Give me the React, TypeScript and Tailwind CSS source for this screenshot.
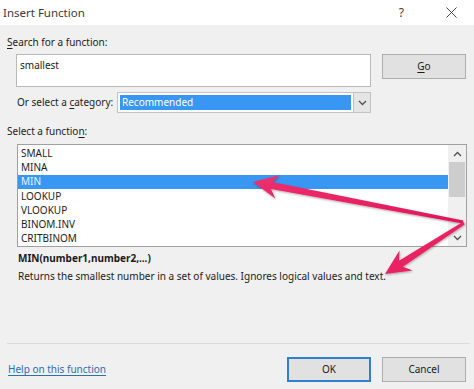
import React from "react";

type P = [number, number];

function arrowPoints(S: P, T: P, w0: number, w1: number, L: number, H: number, N: number): string {
  const dx = T[0] - S[0];
  const dy = T[1] - S[1];
  const len = Math.hypot(dx, dy);
  const u: P = [dx / len, dy / len];
  const n: P = [-u[1], u[0]];
  const B: P = [T[0] - L * u[0], T[1] - L * u[1]];
  const Bb: P = [T[0] - (L + N) * u[0], T[1] - (L + N) * u[1]];
  const pts: P[] = [
    [S[0] + w0 * n[0], S[1] + w0 * n[1]],
    [B[0] + w1 * n[0], B[1] + w1 * n[1]],
    [Bb[0] + H * n[0], Bb[1] + H * n[1]],
    T,
    [Bb[0] - H * n[0], Bb[1] - H * n[1]],
    [B[0] - w1 * n[0], B[1] - w1 * n[1]],
    [S[0] - w0 * n[0], S[1] - w0 * n[1]],
  ];
  return pts.map((p) => `${p[0].toFixed(1)},${p[1].toFixed(1)}`).join(" ");
}

const items = ["SMALL", "MINA", "MIN", "LOOKUP", "VLOOKUP", "BINOM.INV", "CRITBINOM"];

function ChevUp() {
  return (
    <svg width="9" height="6" viewBox="0 0 9 6">
      <polyline points="1,5 4.5,1.5 8,5" fill="none" stroke="#505050" strokeWidth="1.3" />
    </svg>
  );
}
function ChevDown() {
  return (
    <svg width="9" height="6" viewBox="0 0 9 6">
      <polyline points="1,1 4.5,4.5 8,1" fill="none" stroke="#505050" strokeWidth="1.3" />
    </svg>
  );
}

export default function App() {
  return (
    <div className="relative w-[474px] h-[389px] overflow-hidden bg-[#f0f0f0] font-['Noto_Sans',sans-serif] text-[10px] text-[#1b1b1b]">
      {/* title bar */}
      <div className="flex h-[25px] items-center bg-white">
        <div className="ml-[3px] text-[11.5px] text-[#3a3a3a]">Insert Function</div>
        <div className="ml-auto mr-[42px] text-[12px] text-[#3a3a3a]">?</div>
        <svg width="11" height="11" viewBox="0 0 11 11" className="mr-[17px]">
          <line x1="0.5" y1="0.5" x2="10.5" y2="10.5" stroke="#444" strokeWidth="1" />
          <line x1="10.5" y1="0.5" x2="0.5" y2="10.5" stroke="#444" strokeWidth="1" />
        </svg>
      </div>

      {/* search label */}
      <div className="mt-[10px] ml-[7px] h-[14px] leading-[14px]">
        <u className="underline-offset-2">S</u>earch for a function:
      </div>

      {/* search row */}
      <div className="mt-[5px] flex items-start">
        <div className="ml-[16px] h-[33px] w-[355px] border border-[#b9b9b9] bg-white px-[3px] pt-[3px] leading-[14px]">
          smallest
        </div>
        <div className="ml-[11px] flex h-[25px] w-[84px] items-center justify-center border border-[#adadad] bg-[#e1e1e1]">
          <span>
            <u className="underline-offset-2">G</u>o
          </span>
        </div>
      </div>

      {/* category row */}
      <div className="mt-[5px] flex h-[21px] items-center">
        <div className="ml-[17px] w-[100px] whitespace-nowrap">
          Or select a <u className="underline-offset-2">c</u>ategory:
        </div>
        <div className="flex h-[21px] w-[254px] items-stretch border border-[#c3c3c3] bg-white">
          <div className="m-[2px] flex flex-1 items-center bg-[#3897f3] pl-[2px] text-white">Recommended</div>
          <div className="flex w-[17px] items-center justify-center border-l border-[#c3c3c3] bg-[#e5e5e5]">
            <ChevDown />
          </div>
        </div>
      </div>

      {/* select label */}
      <div className="mt-[11px] ml-[7px] h-[14px] leading-[14px]">
        Select a functio<u className="underline-offset-2">n</u>:
      </div>

      {/* list */}
      <div className="mt-[6px] ml-[17px] flex h-[103px] w-[450px] border border-[#a0a0a0] bg-white">
        <div className="flex-1 pt-[1px]">
          {items.map((it) => (
            <div
              key={it}
              className={
                it === "MIN"
                  ? "flex h-[14.3px] items-center bg-[#3897f3] pl-[3px] text-[#eaf4ff]"
                  : "flex h-[14.3px] items-center pl-[3px]"
              }
            >
              {it}
            </div>
          ))}
        </div>
        <div className="flex w-[18px] flex-col bg-[#f0f0f0]">
          <div className="flex h-[17px] items-center justify-center">
            <ChevUp />
          </div>
          <div className="mx-[1px] h-[35px] bg-[#cdcdcd]" />
          <div className="flex-1" />
          <div className="flex h-[17px] items-center justify-center">
            <ChevDown />
          </div>
        </div>
      </div>

      {/* description */}
      <div className="mt-[4px] ml-[18px] h-[14px] font-bold leading-[14px]">MIN(number1,number2,...)</div>
      <div className="mt-[4px] ml-[18px] h-[14px] leading-[14px]">
        Returns the smallest number in a set of values. Ignores logical values and text.
      </div>

      {/* separator */}
      <div className="mt-[60px] ml-[7px] h-px w-[463px] bg-[#dcdcdc]" />

      {/* bottom row */}
      <div className="mt-[13px] flex items-center">
        <div className="ml-[8px] text-[#2f6db5] underline underline-offset-2">Help on this function</div>
        <div className="ml-auto flex h-[25px] w-[84px] items-center justify-center border-2 border-[#2f7fd0] bg-[#e1e1e1]">
          OK
        </div>
        <div className="ml-[11px] mr-[8px] flex h-[25px] w-[84px] items-center justify-center border border-[#adadad] bg-[#e1e1e1]">
          Cancel
        </div>
      </div>

      {/* annotation arrows */}
      <svg className="pointer-events-none absolute left-0 top-0" width="474" height="389" viewBox="0 0 474 389">
        <defs>
          <linearGradient id="ag" x1="0" y1="0" x2="1" y2="1">
            <stop offset="0" stopColor="#f0306e" />
            <stop offset="1" stopColor="#e0155a" />
          </linearGradient>
          <filter id="sh" x="-10%" y="-10%" width="120%" height="130%">
            <feDropShadow dx="0.5" dy="1" stdDeviation="0.8" floodColor="#000" floodOpacity="0.35" />
          </filter>
        </defs>
        <g filter="url(#sh)">
          <polygon points={arrowPoints([463, 222], [253, 182], 1.6, 3.6, 19, 12, 6)} fill="url(#ag)" />
          <polygon points={arrowPoints([464, 223], [385, 274], 1.6, 3.6, 19, 12, 6)} fill="url(#ag)" />
        </g>
      </svg>
    </div>
  );
}
